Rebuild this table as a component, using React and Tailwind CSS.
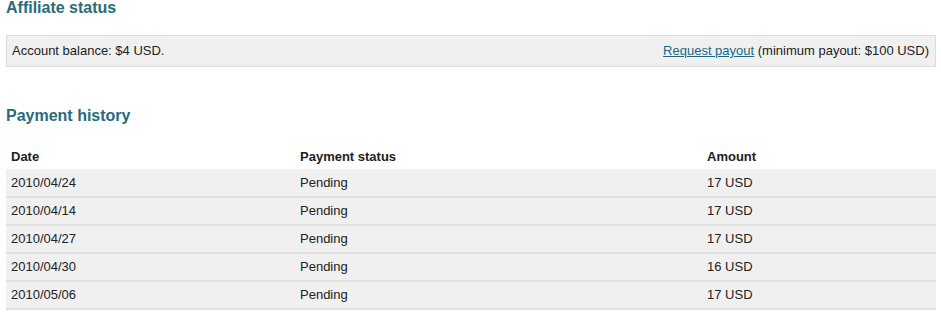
const payments = [
  { date: "2010/04/24", status: "Pending", amount: "17 USD" },
  { date: "2010/04/14", status: "Pending", amount: "17 USD" },
  { date: "2010/04/27", status: "Pending", amount: "17 USD" },
  { date: "2010/04/30", status: "Pending", amount: "16 USD" },
  { date: "2010/05/06", status: "Pending", amount: "17 USD" },
];

function App() {
  return (
    <div className="min-h-screen w-full bg-white pl-[6px] pr-[5px] text-[13px] text-[#222] font-['Liberation_Sans',Arial,sans-serif]">
      <h2 className="text-[16px] leading-[16px] font-bold text-[#2a6b7a]">Affiliate status</h2>

      <div className="mt-[19px] h-[32px] flex items-center justify-between border border-[#dcdcdc] bg-[#f0f0f0] pl-[5px] pr-[6px]">
        <span>Account balance: $4 USD.</span>
        <span>
          <a href="#" className="text-[#1a6a86] underline">Request payout</a> (minimum payout: $100 USD)
        </span>
      </div>

      <h2 className="mt-[41px] text-[16px] leading-[16px] font-bold text-[#2a6b7a]">Payment history</h2>

      <table className="mt-[21px] w-[930px] border-collapse">
        <thead>
          <tr className="h-[24px] text-left">
            <th className="w-[289px] pl-[5px] font-bold">Date</th>
            <th className="w-[407px] pl-[5px] font-bold">Payment status</th>
            <th className="pl-[5px] font-bold">Amount</th>
          </tr>
        </thead>
        <tbody>
          {payments.map((p) => (
            <tr key={p.date} className="h-[28px] bg-[#f0f0f0] border-b-2 border-[#e0e0e0]">
              <td className="pl-[5px]">{p.date}</td>
              <td className="pl-[5px]">{p.status}</td>
              <td className="pl-[5px]">{p.amount}</td>
            </tr>
          ))}
        </tbody>
      </table>
    </div>
  );
}

export default App;
